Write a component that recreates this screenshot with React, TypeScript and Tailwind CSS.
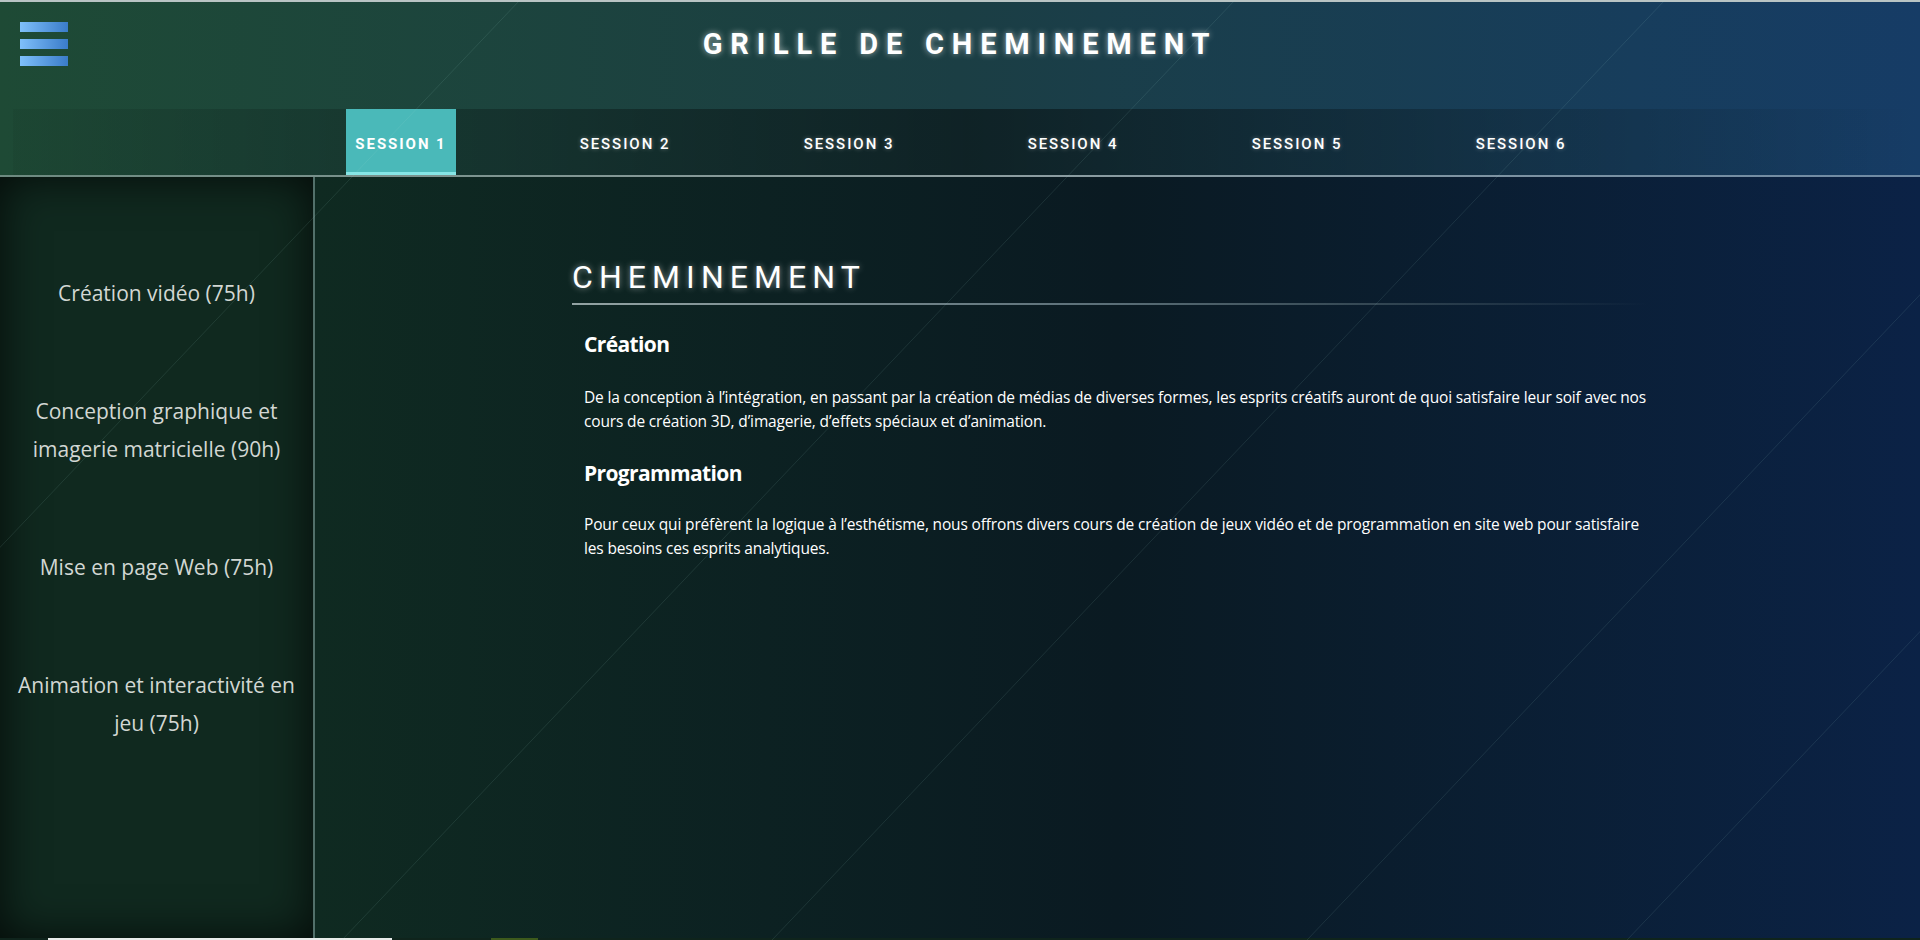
import { useState } from "react";

const sessions = ["SESSION 1", "SESSION 2", "SESSION 3", "SESSION 4", "SESSION 5", "SESSION 6"];

const cours = [
  "Création vidéo (75h)",
  "Conception graphique et imagerie matricielle (90h)",
  "Mise en page Web (75h)",
  "Animation et interactivité en jeu (75h)",
];

// lignes diagonales décoratives (départ en x au haut de la page)
const diagonales = [520, 1235, 1665, 2200, 2520];

function Hamburger() {
  return (
    <button className="flex flex-col gap-[7px] w-[48px] shrink-0">
      <span className="block h-[10px] w-full bg-gradient-to-r from-[#7fc0fa] to-[#3a7cc9]" />
      <span className="block h-[10px] w-full bg-gradient-to-r from-[#7fc0fa] to-[#3a7cc9]" />
      <span className="block h-[10px] w-full bg-gradient-to-r from-[#7fc0fa] to-[#3a7cc9]" />
    </button>
  );
}

function App() {
  const [active, setActive] = useState(0);

  return (
    <div className="relative w-full h-[940px] overflow-hidden bg-[#0c1d24] font-['Open_Sans',sans-serif] flex flex-col">
      {/* Header + sessions */}
      <div className="border-t-2 border-[#b9c4c4] bg-gradient-to-r from-[#1e4a35] via-[#1b3e44] to-[#163c66]">
        <header className="h-[107px] flex items-start pt-[20px] pl-[20px] pr-[68px]">
          <Hamburger />
          <h1 className="flex-1 text-center text-white font-['Roboto',sans-serif] font-bold text-[29px] leading-[44px] tracking-[0.27em] [text-shadow:0_0_6px_rgba(255,255,255,0.6)]">
            GRILLE DE CHEMINEMENT
          </h1>
        </header>

        <nav className="ml-[13px] h-[66px] bg-gradient-to-r from-black/5 via-black/45 to-black/0">
          <ul className="h-full flex justify-center gap-[114px] pr-[11px]">
            {sessions.map((s, i) => (
              <li
                key={s}
                onClick={() => setActive(i)}
                className={
                  i === active
                    ? "w-[110px] h-full flex items-center justify-center pt-[7px] bg-[#4ab9b9] border-b-[3px] border-[#86e6e6] text-white font-['Roboto',sans-serif] font-bold text-[15px] tracking-[0.13em] cursor-pointer"
                    : "w-[110px] h-full flex items-center justify-center pt-[4px] text-white font-['Roboto',sans-serif] font-medium text-[15px] tracking-[0.13em] cursor-pointer [text-shadow:0_0_4px_rgba(255,255,255,0.35)]"
                }
              >
                {s}
              </li>
            ))}
          </ul>
        </nav>
        <div className="h-[2px] bg-gradient-to-r from-[#6d8a80] via-[#8e9ea0] to-[#6f8aa4]" />
      </div>

      {/* Corps */}
      <div className="flex-1 flex min-h-0">
        <aside className="w-[315px] shrink-0 border-r-2 border-[#52706a] bg-[#10291f] shadow-[inset_0_0_45px_rgba(0,0,0,0.75)] px-[12px] pt-[97px] flex flex-col gap-[80px]">
          {cours.map((c) => (
            <p key={c} className="text-center text-[21px] leading-[38px] text-[#d2d7d3]">
              {c}
            </p>
          ))}
        </aside>

        <main className="flex-1 bg-gradient-to-r from-[#0f2a21] via-[#0a1a22] to-[#0b2246] pt-[80px] pl-[257px]">
          <div className="w-[1076px]">
            <h2 className="text-white font-['Roboto',sans-serif] text-[32px] leading-[40px] tracking-[0.19em] [text-shadow:0_0_6px_rgba(255,255,255,0.5)]">
              CHEMINEMENT
            </h2>
            <div className="mt-[6px] h-[2px] bg-gradient-to-r from-[#93a3a3] via-[#5b6f78] to-transparent" />

            <div className="pl-[12px] text-white">
              <h3 className="mt-[25px] text-[21px] leading-[28px] font-bold tracking-[-0.03em]">Création</h3>
              <p className="mt-[27px] w-[1068px] text-[15.5px] leading-[24px] tracking-[-0.01em]">
                De la conception à l’intégration, en passant par la création de médias de diverses formes, les esprits créatifs auront de quoi satisfaire leur soif avec nos cours de création 3D, d’imagerie, d’effets spéciaux et d’animation.
              </p>
              <h3 className="mt-[26px] text-[21px] leading-[28px] font-bold tracking-[-0.03em]">Programmation</h3>
              <p className="mt-[25px] w-[1068px] text-[15.5px] leading-[24px] tracking-[-0.01em]">
                Pour ceux qui préfèrent la logique à l’esthétisme, nous offrons divers cours de création de jeux vidéo et de programmation en site web pour satisfaire les besoins ces esprits analytiques.
              </p>
            </div>
          </div>
        </main>
      </div>

      {/* bas de page tronqué */}
      <div className="h-[2px] flex bg-[#0f241c]">
        <div className="ml-[48px] w-[344px] bg-[#e8ecea]" />
        <div className="ml-[99px] w-[47px] bg-[#3d5a1c]" />
      </div>

      {/* décor : traits diagonaux */}
      <svg className="absolute inset-0 pointer-events-none" width="1920" height="940">
        {diagonales.map((x) => (
          <line key={x} x1={x} y1={0} x2={x - 893} y2={940} stroke="rgba(170,225,215,0.11)" strokeWidth="1" />
        ))}
      </svg>
    </div>
  );
}

export default App;
